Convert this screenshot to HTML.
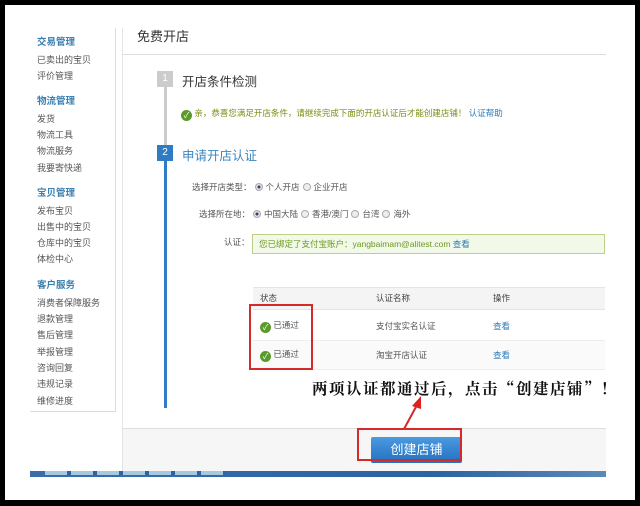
<!DOCTYPE html>
<html><head><meta charset="utf-8"><style>
*{margin:0;padding:0;box-sizing:border-box}
body{width:640px;height:506px;background:#000;position:relative;overflow:hidden;font-family:"Liberation Sans","Noto Sans CJK SC",sans-serif;font-size:9px;color:#555}
.a{position:absolute}
.side div{position:absolute;left:37px;font-size:9px;color:#555;white-space:nowrap}
.side .h{color:#3a7fb0;font-weight:bold;font-size:9.5px}
.rad{display:inline-block;width:8px;height:8px;border-radius:50%;border:1px solid #aaa;background:#eee;vertical-align:-1px;margin:0 3px}
.rad.on{background:radial-gradient(#345 30%,#dde 40%)}
.ck{display:inline-block;width:11px;height:11px;border-radius:50%;background:#5a9a2a;color:#fff;font-size:8px;line-height:11px;text-align:center;vertical-align:-2px}
.lk{color:#2a7ab8}
</style></head><body>
<div class="a" style="left:5px;top:5px;width:630px;height:495px;background:#fff"></div>
<div class="a" style="left:30px;top:28px;width:86px;height:384px;border-right:1px solid #d6dde3;border-bottom:1px solid #d6dde3"></div>
<div class="side">
<div class="h" style="top:34px">交易管理</div>
<div style="top:53px">已卖出的宝贝</div>
<div style="top:69px">评价管理</div>
<div class="h" style="top:93px">物流管理</div>
<div style="top:112px">发货</div>
<div style="top:128px">物流工具</div>
<div style="top:144px">物流服务</div>
<div style="top:161px">我要寄快递</div>
<div class="h" style="top:185px">宝贝管理</div>
<div style="top:204px">发布宝贝</div>
<div style="top:220px">出售中的宝贝</div>
<div style="top:236px">仓库中的宝贝</div>
<div style="top:252px">体检中心</div>
<div class="h" style="top:277px">客户服务</div>
<div style="top:296px">消费者保障服务</div>
<div style="top:312px">退款管理</div>
<div style="top:328px">售后管理</div>
<div style="top:345px">举报管理</div>
<div style="top:361px">咨询回复</div>
<div style="top:377px">违规记录</div>
<div style="top:394px">维修进度</div>
</div>
<div class="a" style="left:122px;top:28px;width:1px;height:450px;background:#e4e4e4"></div>
<div class="a" style="left:137px;top:26px;font-size:13px;color:#333">免费开店</div>
<div class="a" style="left:123px;top:54px;width:483px;height:1px;background:#ddd"></div>
<div class="a" style="left:157px;top:71px;width:16px;height:16px;background:#ccc;color:#fff;font-size:10px;text-align:center;line-height:16px">1</div>
<div class="a" style="left:164px;top:87px;width:3px;height:58px;background:#ccc"></div>
<div class="a" style="left:182px;top:71px;font-size:12.5px;color:#333">开店条件检测</div>
<div class="a" style="left:181px;top:107px;font-size:8.5px;color:#7a8a10;white-space:nowrap"><span class="ck">✓</span> 亲，恭喜您满足开店条件，请继续完成下面的开店认证后才能创建店铺！ <span class="lk">认证帮助</span></div>
<div class="a" style="left:157px;top:145px;width:16px;height:16px;background:#2f7cc4;color:#fff;font-size:10px;text-align:center;line-height:16px">2</div>
<div class="a" style="left:164px;top:161px;width:3px;height:247px;background:#2f7cc4"></div>
<div class="a" style="left:182px;top:145px;font-size:12.5px;color:#3a86c0">申请开店认证</div>
<div class="a" style="left:192px;top:181px;font-size:8.5px;white-space:nowrap">选择开店类型：<span class="rad on"></span>个人开店<span class="rad"></span>企业开店</div>
<div class="a" style="left:199px;top:208px;font-size:8.5px;white-space:nowrap">选择所在地：<span class="rad on"></span>中国大陆<span class="rad"></span>香港/澳门<span class="rad"></span>台湾<span class="rad"></span>海外</div>
<div class="a" style="left:224px;top:236px;font-size:8.5px">认证：</div>
<div class="a" style="left:252px;top:234px;width:353px;height:20px;background:#f3f9e8;border:1px solid #bcd08a;font-size:8.5px;color:#6a9a20;padding:3px 6px;white-space:nowrap">您已绑定了支付宝账户：yangbaimam@alitest.com <span class="lk">查看</span></div>
<div class="a" style="left:253px;top:287px;width:352px;height:23px;background:#f4f4f4;border-top:1px solid #e4e4e4;border-bottom:1px solid #e4e4e4"></div>
<div class="a" style="left:253px;top:340px;width:352px;height:30px;background:#fafafa;border-top:1px solid #eee;border-bottom:1px solid #eee"></div>
<div class="a" style="left:260px;top:292px;font-size:8.5px;color:#444">状态</div>
<div class="a" style="left:376px;top:292px;font-size:8.5px;color:#444">认证名称</div>
<div class="a" style="left:493px;top:292px;font-size:8.5px;color:#444">操作</div>
<div class="a" style="left:260px;top:319px;font-size:8.5px"><span class="ck">✓</span> 已通过</div>
<div class="a" style="left:376px;top:320px;font-size:8.5px">支付宝实名认证</div>
<div class="a lk" style="left:493px;top:320px;font-size:8.5px">查看</div>
<div class="a" style="left:260px;top:348px;font-size:8.5px"><span class="ck">✓</span> 已通过</div>
<div class="a" style="left:376px;top:349px;font-size:8.5px">淘宝开店认证</div>
<div class="a lk" style="left:493px;top:349px;font-size:8.5px">查看</div>
<div class="a" style="left:249px;top:304px;width:64px;height:66px;border:2px solid #d42a2a"></div>
<div class="a" style="left:312px;top:377px;font-family:'Noto Serif CJK SC','Liberation Serif',serif;font-weight:bold;font-size:15.5px;letter-spacing:1.5px;color:#111;white-space:nowrap">两项认证都通过后，点击“创建店铺”！</div>
<div class="a" style="left:123px;top:428px;width:483px;height:43px;background:#f6f6f6;border-top:1px solid #ddd"></div>
<div class="a" style="left:371px;top:437px;width:91px;height:26px;background:linear-gradient(#4a9ae0,#2470c0);border-radius:2px;color:#fff;font-size:13px;text-align:center;line-height:26px">创建店铺</div>
<div class="a" style="left:357px;top:428px;width:105px;height:33px;border:2px solid #d42a2a"></div>
<svg class="a" style="left:395px;top:392px" width="35" height="40"><line x1="9" y1="37" x2="22" y2="13" stroke="#d42a2a" stroke-width="2"/><polygon points="26,4 17,14 26,17" fill="#e02020"/></svg>
<div class="a" style="left:30px;top:471px;width:576px;height:6px;background:linear-gradient(90deg,#3a6ea8,#2d63a0 70%,#5a88b8)"></div>
<div class="a" style="left:45px;top:471px;width:180px;height:4px;background:repeating-linear-gradient(90deg,#a8c8e0 0 22px,#2d63a0 22px 26px)"></div>
</body></html>
